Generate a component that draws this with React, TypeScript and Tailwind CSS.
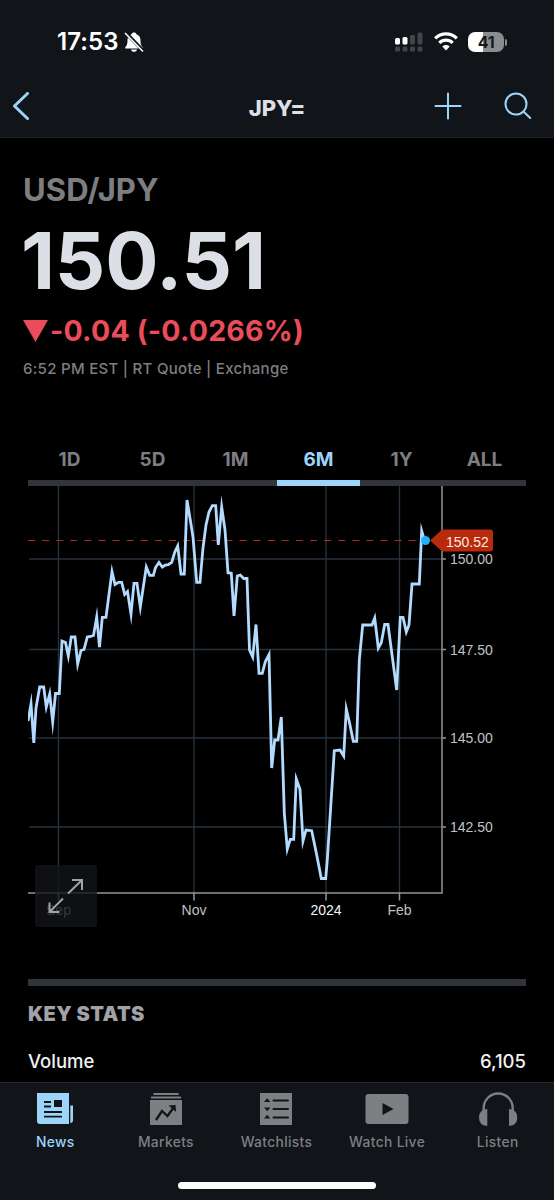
import { clsx } from "clsx";

const ranges = ["1D", "5D", "1M", "6M", "1Y", "ALL"];

const yTicks = [
  { y: 559, label: "150.00" },
  { y: 649.5, label: "147.50" },
  { y: 738, label: "145.00" },
  { y: 827, label: "142.50" },
];

const xTicks = [
  { x: 58.5, label: "Sep" },
  { x: 194, label: "Nov" },
  { x: 326, label: "2024", strong: true },
  { x: 399.5, label: "Feb" },
];

const pricePoints =
  "28,721 31,704 33.8,743 36,708 39.7,687 43.7,687 46.3,707 49.7,694 52.7,722 55.5,693.5 59.3,693.5 62,641 65.5,642.5 68.3,656 71.3,637 75,637 77.7,664 81,650.5 84,649.5 87.3,637 90.5,636.5 93.5,635.5 96.7,617 99.5,647 102.3,617.3 106,617.3 112,571.5 115,584.5 118.5,582.3 121.7,582.3 124.7,594.5 127.5,591.5 131,614 134,583.3 137,583.3 140.3,607 146.3,567 149.7,575.3 153.3,575.3 155.5,567.5 159,562.5 162.3,567 165.3,565 168.3,564.7 171.7,562.3 174.7,552.3 177.7,546 181,574 184.3,574 187,500 190.3,520 193,537 196.7,582.3 200,582.3 203,548 206,525 209,512 212.3,505.7 215.7,505.7 218.3,545 221.7,507 225,530 228,572.7 231.3,573.3 234,616 237.3,576 240.3,575 243.7,578.5 247,578.5 249.5,650 252.7,657 256,624.5 259,673.3 262.3,673.3 265.3,661.7 269,654.5 271.7,768 274.7,740 278,740 281.3,717 284.3,813 287.3,849 290.3,839.3 293.7,839.3 296.3,779 300,789.3 303,841 306,830 311.7,830.7 316.7,855 321.3,878.5 325.7,878.5 327.3,860 334.3,750.7 340,750 343.7,756 346.3,709 349.3,721.7 353.3,741.3 356.7,741.3 359.3,660 362.7,625 372,625 374.7,618 378.3,648 381.3,642.7 384.7,624.5 388,624.5 396.7,690 400.3,617.3 403,617.3 406.3,632 409,625 412,584 419.3,584 421.7,531 424.5,540.5";

function StatusBar() {
  return (
    <div className="flex h-[74px] items-start justify-between pt-[29px] pr-[47px] pl-[57px]">
      <div className="flex items-center">
        <span className="text-[24px] leading-[26px] font-semibold tracking-[0.1px] text-white">
          17:53
        </span>
        <svg className="ml-[5px] h-[22px] w-[20px]" viewBox="0 0 20 22">
          <path
            d="M10 1.5c-1.3 0-2.2.7-2.4 1.7C4.8 4.2 3.5 6.5 3.5 9c0 4.5-.7 5.6-2 7-.7.8-.4 1.5.5 1.5h16c.9 0 1.2-.7.5-1.5-1.3-1.4-2-2.5-2-7 0-2.5-1.3-4.8-4.1-5.8C12.2 2.2 11.3 1.5 10 1.5Z"
            fill="white"
          />
          <path d="M7 18.5h6c-.3 1.4-1.5 2.3-3 2.3s-2.7-.9-3-2.3Z" fill="white" />
          <path d="M1.5 1.5 19.5 20" stroke="#111418" strokeWidth="3.6" />
          <path d="M1 2 19 20.5" stroke="white" strokeWidth="1.6" />
        </svg>
      </div>
      <div className="flex items-center pt-[2px]">
        <svg className="h-[22px] w-[30px]" viewBox="0 0 30 22">
          <g fill="white">
            <rect x="2" y="7" width="5" height="6.5" rx="1.5" />
            <rect x="9.5" y="6" width="5" height="7.5" rx="1.5" />
          </g>
          <g fill="#42454a">
            <rect x="17" y="4" width="5" height="9.5" rx="1.5" />
            <rect x="24.5" y="1.5" width="5" height="12" rx="1.5" />
            <rect x="2" y="15.5" width="5" height="5" rx="1.5" />
            <rect x="9.5" y="15.5" width="5" height="5" rx="1.5" />
            <rect x="17" y="15.5" width="5" height="5" rx="1.5" />
            <rect x="24.5" y="15.5" width="5" height="5" rx="1.5" />
          </g>
        </svg>
        <svg className="ml-[10px] h-[20px] w-[26px]" viewBox="0 0 26 20" fill="none" stroke="white">
          <path d="M2.2 6.3a15.6 15.6 0 0 1 21.6 0" strokeWidth="3.2" />
          <path d="M6.3 10.9a9.7 9.7 0 0 1 13.4 0" strokeWidth="3.2" />
          <path d="M9.3 14.5a5.4 5.4 0 0 1 7.4 0L13 18.5Z" fill="white" stroke="none" />
        </svg>
        <div className="ml-[9px] flex h-[20px] w-[36px] items-center justify-center rounded-[7px] bg-linear-to-r from-white from-41% to-[#8a8c8e] to-41% text-[16px] font-bold tracking-[-0.3px] text-[#171a1d]">
          41
        </div>
        <div className="ml-[1px] h-[7px] w-[2px] rounded-r-full bg-[#8a8c8e]" />
      </div>
    </div>
  );
}

function NavBar() {
  return (
    <div className="grid h-[64px] grid-cols-3 items-center border-b border-[#202327] pt-px text-[#9dd4fa]">
      <svg className="ml-[12px] h-[28px] w-[18px]" viewBox="0 0 18 28" fill="none">
        <path d="M15.5 1.5 2.5 14l13 12.5" stroke="currentColor" strokeWidth="3" strokeLinecap="round" strokeLinejoin="round" />
      </svg>
      <h1 className="pt-[3px] text-center text-[22px] leading-none font-extrabold tracking-[-0.1px] text-[#dcdfe5]">
        JPY=
      </h1>
      <div className="flex items-center justify-end pr-[22px]">
        <svg className="h-[28px] w-[28px]" viewBox="0 0 28 28" fill="none" stroke="currentColor" strokeWidth="2" strokeLinecap="round">
          <path d="M14 1.5v25M1.5 14h25" />
        </svg>
        <svg className="ml-[42px] h-[28px] w-[28px]" viewBox="0 0 28 28" fill="none" stroke="currentColor" strokeWidth="2" strokeLinecap="round">
          <circle cx="12" cy="12" r="10.5" />
          <path d="m19.7 19.7 6.5 6.3" />
        </svg>
      </div>
    </div>
  );
}

function Quote() {
  return (
    <section className="h-[309px] pt-[32px] pl-[23px]">
      <h2 className="h-[40px] text-[31px] leading-[40px] font-bold tracking-[0.1px] text-[#7d7e81]">
        USD/JPY
      </h2>
      <p className="mt-[7px] -ml-[2px] h-[84px] text-[79px] leading-[86px] font-bold tracking-[-0.2px] text-[#dcdfe5]">
        150.51
      </p>
      <p className="mt-[12px] flex h-[36px] items-center text-[28.5px] leading-[36px] font-bold tracking-[0.2px] whitespace-nowrap text-[#ea4c59]">
        <svg className="mr-[2px] h-[22px] w-[25px]" viewBox="0 0 25 22">
          <path d="M0 0h25L12.5 22Z" fill="currentColor" />
        </svg>
        -0.04 (-0.0266%)
      </p>
      <p className="mt-[9px] text-[15px] leading-[22px] font-medium tracking-[0.29px] whitespace-nowrap text-[#7d7e81]">
        6:52 PM EST | RT Quote | Exchange
      </p>
    </section>
  );
}

function RangeTabs() {
  return (
    <div className="mx-[28px] grid h-[39px] grid-cols-6">
      {ranges.map((range) => (
        <button
          key={range}
          type="button"
          className={clsx(
            "flex items-start justify-center border-b-[6px] text-[19px] leading-[26px] font-bold",
            range === "6M" ? "border-[#9dd4fa] text-[#9dd4fa]" : "border-[#313539] text-[#7d7e81]",
          )}
        >
          {range}
        </button>
      ))}
    </div>
  );
}

function PriceChart() {
  return (
    <div className="relative mx-[28px] h-[493px]">
      {/* viewBox keeps page coordinates so ticks and prices share one scale */}
      <svg className="h-[440px] w-[498px]" viewBox="28 486 498 440" fontFamily="'Liberation Sans', Arial, sans-serif" fontSize="14">
        <g stroke="#26323c" strokeWidth="1.4">
          {xTicks.map((t) => (
            <path key={t.label} d={`M${t.x} 486V893`} />
          ))}
          {yTicks.map((t) => (
            <path key={t.label} d={`M29 ${t.y}H442`} />
          ))}
        </g>
        <path d="M28 540.5H424" stroke="#b02a22" strokeWidth="1.2" strokeDasharray="7 7.1" />
        <polyline points={pricePoints} fill="none" stroke="#b3daff" strokeWidth="2.8" strokeMiterlimit="10" />
        <g stroke="#929497" strokeWidth="1.5">
          <path d="M28 893H442V486" fill="none" />
          {xTicks.map((t) => (
            <path key={t.label} d={`M${t.x} 893v7.5`} />
          ))}
          {yTicks.map((t) => (
            <path key={t.label} d={`M442 ${t.y}h4`} />
          ))}
        </g>
        {yTicks.map((t) => (
          <text key={t.label} x="450" y={t.y + 5} fill="#c1c2c4">
            {t.label}
          </text>
        ))}
        {xTicks.map((t) => (
          <text key={t.label} x={t.x} y="915" textAnchor="middle" fill={t.strong ? "#f4f5f6" : "#c1c2c4"}>
            {t.label}
          </text>
        ))}
        <path d="M430 540.5 441 530.5q1.5-1 3-1h46q3 0 3 3v16q0 3-3 3h-46q-1.5 0-3-1Z" fill="#b9290c" />
        <circle cx="425.5" cy="540.5" r="4.5" fill="#22b1fb" />
        <text x="446" y="546.5" fill="#fbe9e5">
          150.52
        </text>
      </svg>
      <button
        type="button"
        aria-label="Expand chart"
        className="absolute top-[379px] left-[7px] flex h-[62px] w-[62px] items-center justify-center rounded-[2px] bg-[#111418]/80"
      >
        <svg className="h-[36px] w-[36px]" viewBox="0 0 36 36" fill="none" stroke="#a0a2a5" strokeWidth="2">
          <path d="m20 15.5 14-13.500M24 2h10v10M15 20.5 1.500 34M1.500 24.500V34h10" />
        </svg>
      </button>
    </div>
  );
}

function KeyStats() {
  return (
    <section className="mx-[28px] h-[104px] border-t-[7px] border-[#313539]">
      <h3 className="mt-[15px] text-[20px] leading-[26px] font-black tracking-[0.4px] text-[#a1a2a7]">KEY STATS</h3>
      <div className="mt-[21px] flex justify-between text-[18.5px] leading-[26px] font-medium text-[#f1f2f4]">
        <span>Volume</span>
        <span>6,105</span>
      </div>
    </section>
  );
}

function NewsIcon() {
  return (
    <svg className="h-[34px] w-[38px]" viewBox="0 0 38 34">
      <path d="M1 1h32v31H4q-3 0-3-3Z" fill="currentColor" />
      <path d="M34.3 13.5H37V28q0 3-2.7 3Z" fill="currentColor" />
      <path d="M8 10h7M8 14.5h7M8 20h18M8 24.7h18" stroke="#111418" strokeWidth="1.8" />
      <path d="M18 8h8v7h-8Z" fill="#111418" />
    </svg>
  );
}

function MarketsIcon() {
  return (
    <svg className="h-[34px] w-[34px]" viewBox="0 0 34 34">
      <path d="M4.5 1h25v2h-25ZM2 4.5h30v2H2ZM1 8h32v25H1Z" fill="currentColor" />
      <path d="m7 28 6-9 5.5 5L25 15" fill="none" stroke="#111418" strokeWidth="2.3" />
      <path d="m19.5 13.5 7-.5.7 7Z" fill="#111418" />
    </svg>
  );
}

function WatchlistsIcon() {
  return (
    <svg className="h-[34px] w-[34px]" viewBox="0 0 34 34">
      <path d="M1 1h32v32H1Z" fill="currentColor" />
      <path d="m5 10 3.2-3.7L11.4 10ZM5 15.5h6.4l-3.2 3.7ZM5 26.5l3.2-3.7 3.2 3.7Z" fill="#111418" />
      <path d="M14.5 8.5H29M14.5 17H29M14.5 25.5H29" stroke="#111418" strokeWidth="2" strokeLinecap="round" />
    </svg>
  );
}

function WatchLiveIcon() {
  return (
    <svg className="h-[34px] w-[44px]" viewBox="0 0 44 34">
      <rect x=".5" y="2" width="43" height="30" rx="3" fill="currentColor" />
      <path d="M17.5 11v12L28.5 17Z" fill="#111418" />
    </svg>
  );
}

function ListenIcon() {
  return (
    <svg className="h-[34px] w-[40px]" viewBox="0 0 40 34">
      <path d="M5.7 19v-3a14.500 14.500 0 0 1 29 0v3" fill="none" stroke="currentColor" strokeWidth="2.4" />
      <path d="M9.3 17v17Q1 33.5 1 25.5T9.3 17ZM31 17v17q8.3-.5 8.3-8.5T31 17Z" fill="currentColor" />
    </svg>
  );
}

const tabs = [
  { label: "News", Icon: NewsIcon, active: true },
  { label: "Markets", Icon: MarketsIcon },
  { label: "Watchlists", Icon: WatchlistsIcon },
  { label: "Watch Live", Icon: WatchLiveIcon },
  { label: "Listen", Icon: ListenIcon },
];

function TabBar() {
  return (
    <footer className="h-[118px] border-t border-[#26292d] bg-[#111418]">
      <nav className="grid h-[99px] grid-cols-5 pt-[9px] pr-px">
        {tabs.map(({ label, Icon, active }) => (
          <button
            key={label}
            type="button"
            className={clsx(
              "flex flex-col items-center text-[13.8px] leading-[20px] font-medium tracking-[0.35px] whitespace-nowrap",
              active ? "text-[#9dd4fa]" : "text-[#7d7f83]",
            )}
          >
            <Icon />
            <span className="mt-[6px]">{label}</span>
          </button>
        ))}
      </nav>
      <div className="mx-auto h-[7px] w-[198px] rounded-full bg-white" />
    </footer>
  );
}

export default function App() {
  return (
    <div className="flex h-[1200px] w-[554px] flex-col overflow-hidden bg-black font-['Inter',sans-serif]">
      <header className="bg-[#111418]">
        <StatusBar />
        <NavBar />
      </header>
      <main className="h-[944px] overflow-hidden">
        <Quote />
        <RangeTabs />
        <PriceChart />
        <KeyStats />
      </main>
      <TabBar />
    </div>
  );
}
